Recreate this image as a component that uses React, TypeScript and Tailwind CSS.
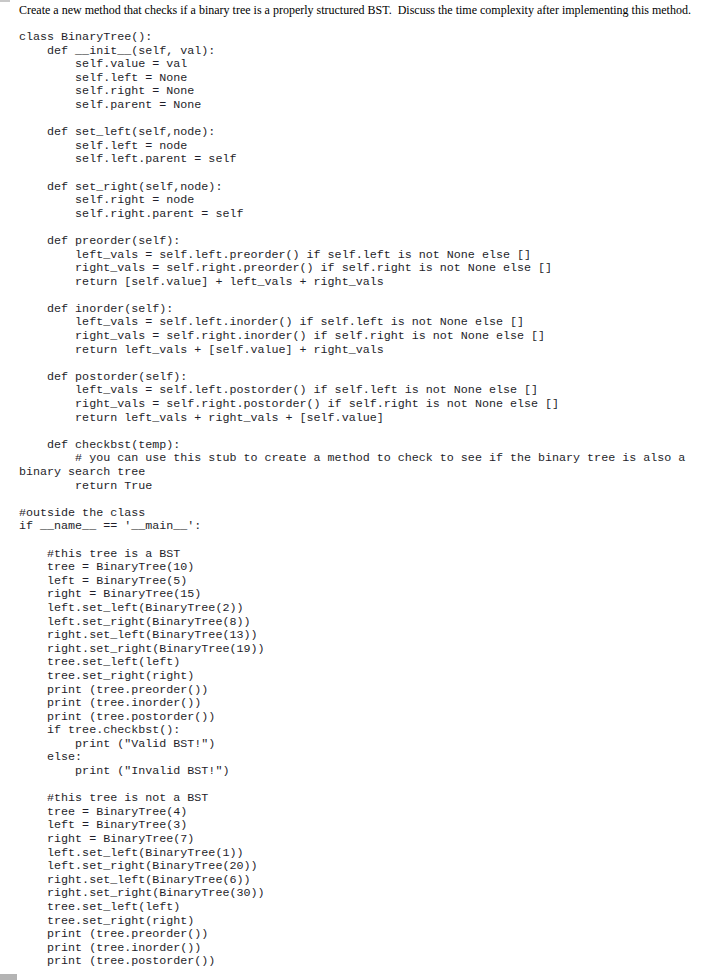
const code = `class BinaryTree():
    def __init__(self, val):
        self.value = val
        self.left = None
        self.right = None
        self.parent = None

    def set_left(self,node):
        self.left = node
        self.left.parent = self

    def set_right(self,node):
        self.right = node
        self.right.parent = self

    def preorder(self):
        left_vals = self.left.preorder() if self.left is not None else []
        right_vals = self.right.preorder() if self.right is not None else []
        return [self.value] + left_vals + right_vals

    def inorder(self):
        left_vals = self.left.inorder() if self.left is not None else []
        right_vals = self.right.inorder() if self.right is not None else []
        return left_vals + [self.value] + right_vals

    def postorder(self):
        left_vals = self.left.postorder() if self.left is not None else []
        right_vals = self.right.postorder() if self.right is not None else []
        return left_vals + right_vals + [self.value]

    def checkbst(temp):
        # you can use this stub to create a method to check to see if the binary tree is also a
binary search tree
        return True

#outside the class
if __name__ == '__main__':

    #this tree is a BST
    tree = BinaryTree(10)
    left = BinaryTree(5)
    right = BinaryTree(15)
    left.set_left(BinaryTree(2))
    left.set_right(BinaryTree(8))
    right.set_left(BinaryTree(13))
    right.set_right(BinaryTree(19))
    tree.set_left(left)
    tree.set_right(right)
    print (tree.preorder())
    print (tree.inorder())
    print (tree.postorder())
    if tree.checkbst():
        print ("Valid BST!")
    else:
        print ("Invalid BST!")

    #this tree is not a BST
    tree = BinaryTree(4)
    left = BinaryTree(3)
    right = BinaryTree(7)
    left.set_left(BinaryTree(1))
    left.set_right(BinaryTree(20))
    right.set_left(BinaryTree(6))
    right.set_right(BinaryTree(30))
    tree.set_left(left)
    tree.set_right(right)
    print (tree.preorder())
    print (tree.inorder())
    print (tree.postorder())`;

export default function App() {
  return (
    <div className="w-[716px] h-[980px] bg-white overflow-hidden flex flex-col">
      <div className="w-[10px] h-[2px] bg-[#c8c8c8]" />
      <div className="pl-[19px] pt-[1px]">
        <p className="text-[12px] leading-[14px] text-black whitespace-pre font-['Liberation_Serif',serif]">
          {'Create a new method that checks if a binary tree is a properly structured BST.  Discuss the time complexity after implementing this method.'}
        </p>
        <pre className="mt-[14px] text-[11.7px] leading-[13.6px] text-[#1e1e2a] font-['Liberation_Mono',monospace]">
          {code}
        </pre>
      </div>
      <div className="mt-[5px] w-[17px] h-[6px] bg-[#b4b4b4]" />
    </div>
  );
}
